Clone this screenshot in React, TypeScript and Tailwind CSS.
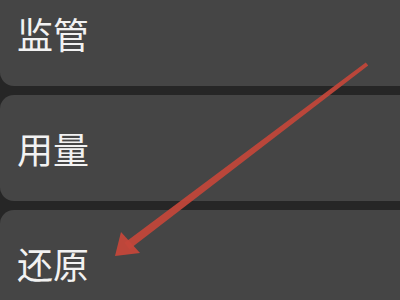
import React from "react";

const items = ["监管", "用量", "还原"];

export default function App() {
  return (
    <div className="relative w-[400px] h-[300px] overflow-hidden bg-[#262626]">
      <div className="flex flex-col gap-[9px] -mt-[20px]">
        {items.map((label) => (
          <div
            key={label}
            className="h-[106px] ml-0 -mr-4 rounded-[14px] bg-[#454545] flex items-center pl-[17px]"
          >
            <span
              className="text-[36px] leading-none text-[#f2f2f2]"
              style={{ fontFamily: '"Noto Sans CJK SC", "Noto Sans", sans-serif' }}
            >
              {label}
            </span>
          </div>
        ))}
      </div>

      {/* Annotation arrow, tapering toward the tip */}
      <svg className="absolute inset-0 pointer-events-none" width="400" height="300" viewBox="0 0 400 300">
        <polygon points="368.2,65.6 365.8,62.4 124.6,242.8 129.4,249.2" fill="#c4473a" opacity="0.92" />
        <polygon points="115,256 121,232 140,253" fill="#c4473a" opacity="0.95" />
      </svg>
    </div>
  );
}
